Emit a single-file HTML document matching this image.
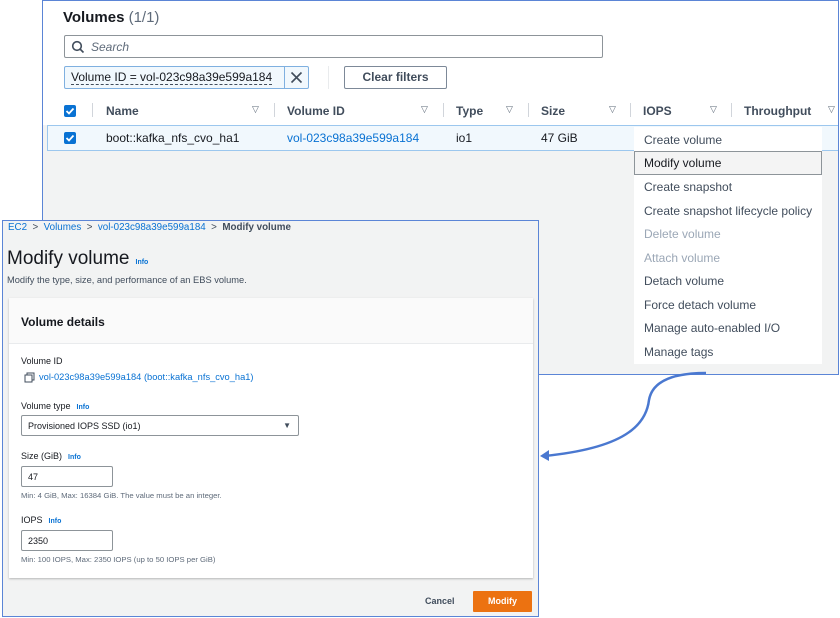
<!DOCTYPE html>
<html><head><style>
*{box-sizing:border-box;margin:0;padding:0}
body{width:840px;height:618px;background:#fff;font-family:"Liberation Sans",sans-serif;position:relative;overflow:hidden;color:#16191f}
.a{position:absolute}
.top{left:42px;top:0;width:797px;height:375px;border:1.5px solid #5b85d6;background:#f2f3f3;overflow:hidden}
.link{color:#0972d3}
.th{font-weight:bold;font-size:12px;color:#414d5c}
.menu{left:634px;top:127px;width:188px;height:237px;background:#fff}
.mi{position:absolute;left:10px;font-size:12px;color:#414d5c}
.dis{color:#9ba7b6}
.bot{left:2px;top:220px;width:537px;height:397px;border:1.5px solid #5b85d6;background:#f2f3f3;overflow:hidden}
.lbl{font-size:9px;color:#16191f}
.info{font-size:7px;font-weight:bold;color:#0972d3;margin-left:6px}
.inp{position:absolute;background:#fff;border:1px solid #8d9499;border-radius:2px;font-size:9px;padding-left:6px;display:flex;align-items:center}
.hint{font-size:7.7px;color:#5f6b7a}
</style></head><body>

<div class="a top">
  <div class="a" style="left:0;top:0;width:797px;height:97px;background:#fff"></div>
  <div class="a" style="left:20px;top:8px;font-size:15px;font-weight:bold">Volumes <span style="font-weight:normal;color:#5f6b7a">(1/1)</span></div>
  <div class="a" style="left:21px;top:34px;width:539px;height:23px;border:1px solid #8d9499;border-radius:2px;background:#fff"></div>
  <svg class="a" style="left:28px;top:39px" width="14" height="14" viewBox="0 0 14 14"><circle cx="6" cy="6" r="4.3" fill="none" stroke="#414d5c" stroke-width="1.6"/><path d="M9 9l3.5 3.5" stroke="#414d5c" stroke-width="1.6"/></svg>
  <div class="a" style="left:48px;top:39px;font-size:12px;font-style:italic;color:#5f6b7a">Search</div>
  <div class="a" style="left:21px;top:65px;width:245px;height:23px;border:1px solid #7fb0e0;background:#f1f8fd;border-radius:2px"></div>
  <div class="a" style="left:28px;top:69px;font-size:12px;border-bottom:1px dashed #414d5c;line-height:14px">Volume ID = vol-023c98a39e599a184</div>
  <div class="a" style="left:241px;top:65px;width:1px;height:23px;background:#7fb0e0"></div>
  <svg class="a" style="left:247px;top:70px" width="13" height="13"><path d="M1.5 1.5l10 10M11.5 1.5l-10 10" stroke="#414d5c" stroke-width="1.6"/></svg>
  <div class="a" style="left:285px;top:65px;width:1px;height:23px;background:#e9ebed"></div>
  <div class="a" style="left:301px;top:65px;width:103px;height:23px;border:1px solid #7d8998;border-radius:2px;font-size:12px;font-weight:bold;color:#414d5c;text-align:center;line-height:21px">Clear filters</div>

  <div class="a" style="left:0;top:97px;width:797px;height:27px;background:#fff"></div>
  <div class="a" style="left:21px;top:104px;width:12px;height:12px;background:#0972d3;border-radius:2px"></div>
  <svg class="a" style="left:21px;top:104px" width="12" height="12"><path d="M2.5 6l2.5 2.5 4.5-5" stroke="#fff" stroke-width="1.8" fill="none"/></svg>
  <div class="a th" style="left:63px;top:103px">Name</div>
  <div class="a th" style="left:244px;top:103px">Volume ID</div>
  <div class="a th" style="left:413px;top:103px">Type</div>
  <div class="a th" style="left:498px;top:103px">Size</div>
  <div class="a th" style="left:600px;top:103px">IOPS</div>
  <div class="a th" style="left:701px;top:103px">Throughput</div>
  <div class="a" style="left:209px;top:103px;font-size:9px;color:#5f6b7a">▽</div>
  <div class="a" style="left:378px;top:103px;font-size:9px;color:#5f6b7a">▽</div>
  <div class="a" style="left:463px;top:103px;font-size:9px;color:#5f6b7a">▽</div>
  <div class="a" style="left:566px;top:103px;font-size:9px;color:#5f6b7a">▽</div>
  <div class="a" style="left:667px;top:103px;font-size:9px;color:#5f6b7a">▽</div>
  <div class="a" style="left:785px;top:103px;font-size:9px;color:#5f6b7a">▽</div>
  <div class="a" style="left:49px;top:102px;width:1px;height:14px;background:#d1d5db"></div>
  <div class="a" style="left:231px;top:102px;width:1px;height:14px;background:#d1d5db"></div>
  <div class="a" style="left:400px;top:102px;width:1px;height:14px;background:#d1d5db"></div>
  <div class="a" style="left:485px;top:102px;width:1px;height:14px;background:#d1d5db"></div>
  <div class="a" style="left:587px;top:102px;width:1px;height:14px;background:#d1d5db"></div>
  <div class="a" style="left:688px;top:102px;width:1px;height:14px;background:#d1d5db"></div>

  <div class="a" style="left:4px;top:124px;width:793px;height:26px;background:#f1f8fd;border-top:1px solid #9cc7ee;border-bottom:1px solid #9cc7ee;border-left:1px solid #9cc7ee"></div>
  <div class="a" style="left:21px;top:131px;width:12px;height:12px;background:#0972d3;border-radius:2px"></div>
  <svg class="a" style="left:21px;top:131px" width="12" height="12"><path d="M2.5 6l2.5 2.5 4.5-5" stroke="#fff" stroke-width="1.8" fill="none"/></svg>
  <div class="a" style="left:63px;top:130px;font-size:12px">boot::kafka_nfs_cvo_ha1</div>
  <div class="a link" style="left:244px;top:130px;font-size:12px">vol-023c98a39e599a184</div>
  <div class="a" style="left:413px;top:130px;font-size:12px">io1</div>
  <div class="a" style="left:498px;top:130px;font-size:12px">47 GiB</div>
</div>

<div class="a menu">
  <div class="mi" style="top:6px">Create volume</div>
  <div class="a" style="left:0;top:24px;width:188px;height:24px;border:1px solid #8d9499;background:#f4f4f4"></div>
  <div class="mi" style="top:29px;color:#16191f">Modify volume</div>
  <div class="mi" style="top:53px">Create snapshot</div>
  <div class="mi" style="top:77px">Create snapshot lifecycle policy</div>
  <div class="mi dis" style="top:100px">Delete volume</div>
  <div class="mi dis" style="top:124px">Attach volume</div>
  <div class="mi" style="top:147px">Detach volume</div>
  <div class="mi" style="top:171px">Force detach volume</div>
  <div class="mi" style="top:194px">Manage auto-enabled I/O</div>
  <div class="mi" style="top:218px">Manage tags</div>
</div>

<svg class="a" style="left:530px;top:365px" width="190" height="100"><path d="M176 8C140 8 122 18 119 35C116 60 95 83 14 91" stroke="#4a78d0" stroke-width="2.5" fill="none"/><path d="M10 91l9-6v11z" fill="#4a78d0"/></svg>

<div class="a bot">
  <div class="a" style="left:5px;top:1px;font-size:9.8px;color:#414d5c"><span class="link">EC2</span> &nbsp;&gt;&nbsp; <span class="link">Volumes</span> &nbsp;&gt;&nbsp; <span class="link">vol-023c98a39e599a184</span> &nbsp;&gt;&nbsp; <b>Modify volume</b></div>
  <div class="a" style="left:4px;top:27px;font-size:19px">Modify volume<span class="info" style="font-size:7px">Info</span></div>
  <div class="a" style="left:4px;top:54px;font-size:9.3px;color:#414d5c">Modify the type, size, and performance of an EBS volume.</div>
  <div class="a" style="left:6px;top:77px;width:524px;height:280px;background:#fff;box-shadow:0 1px 2px rgba(0,0,0,.25)"></div>
  <div class="a" style="left:6px;top:77px;width:524px;height:46px;background:#fafafa;border-bottom:1px solid #e9ebed"></div>
  <div class="a" style="left:18px;top:94px;font-size:12px;font-weight:bold">Volume details</div>
  <div class="a lbl" style="left:18px;top:135px">Volume ID</div>
  <svg class="a" style="left:21px;top:151px" width="11" height="11"><rect x="3" y="1" width="7" height="7" fill="#fff" stroke="#414d5c"/><rect x="1" y="3" width="7" height="7" fill="#fff" stroke="#414d5c"/></svg>
  <div class="a link" style="left:36px;top:151px;font-size:9.3px">vol-023c98a39e599a184 (boot::kafka_nfs_cvo_ha1)</div>
  <div class="a lbl" style="left:18px;top:180px">Volume type<span class="info">Info</span></div>
  <div class="inp" style="left:18px;top:194px;width:278px;height:21px">Provisioned IOPS SSD (io1)<span style="position:absolute;right:7px;font-size:8px;color:#414d5c">▼</span></div>
  <div class="a lbl" style="left:18px;top:230px">Size (GiB)<span class="info">Info</span></div>
  <div class="inp" style="left:18px;top:245px;width:92px;height:21px">47</div>
  <div class="a hint" style="left:18px;top:270px">Min: 4 GiB, Max: 16384 GiB. The value must be an integer.</div>
  <div class="a lbl" style="left:18px;top:294px">IOPS<span class="info">Info</span></div>
  <div class="inp" style="left:18px;top:309px;width:92px;height:21px">2350</div>
  <div class="a hint" style="left:18px;top:334px">Min: 100 IOPS, Max: 2350 IOPS (up to 50 IOPS per GiB)</div>
  <div class="a" style="left:422px;top:375px;font-size:9px;font-weight:bold;color:#414d5c">Cancel</div>
  <div class="a" style="left:470px;top:370px;width:59px;height:21px;background:#ec7211;color:#fff;font-size:9px;font-weight:bold;text-align:center;line-height:21px;border-radius:1px">Modify</div>
</div>
</body></html>
